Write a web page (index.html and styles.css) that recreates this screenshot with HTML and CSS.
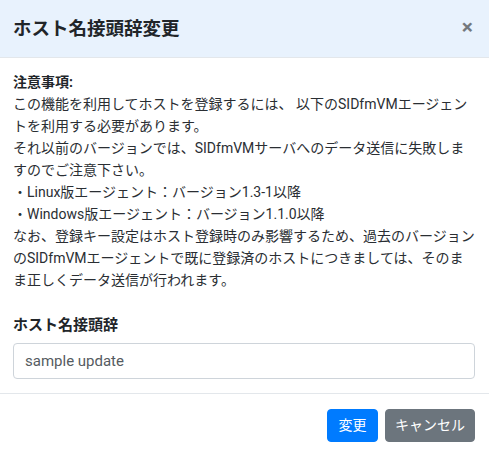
FILE: index.html
```html
<!DOCTYPE html>
<html lang="ja">
<head>
<meta charset="utf-8">
<title>ホスト名接頭辞変更</title>
<link rel="stylesheet" href="styles.css">
</head>
<body>
<div class="modal">
  <div class="modal-header">
    <h5 class="modal-title">ホスト名接頭辞変更</h5>
    <button class="close" type="button" aria-label="Close">×</button>
  </div>
  <div class="modal-body">
    <p class="note"><strong>注意事項:</strong><br>この機能を利用してホストを登録するには、 以下のSIDfmVMエージェントを利用する必要があります。<br>それ以前のバージョンでは、SIDfmVMサーバへのデータ送信に失敗しますのでご注意下さい。<br>・Linux版エージェント：バージョン1.3-1以降<br>・Windows版エージェント：バージョン1.1.0以降<br>なお、登録キー設定はホスト登録時のみ影響するため、過去のバージョンのSIDfmVMエージェントで既に登録済のホストにつきましては、そのまま正しくデータ送信が行われます。</p>
    <div class="form-group">
      <label class="label" for="prefix">ホスト名接頭辞</label>
      <input class="input" id="prefix" type="text" value="sample update">
    </div>
  </div>
  <div class="modal-footer">
    <button class="btn btn-primary" type="button">変更</button>
    <button class="btn btn-secondary" type="button">キャンセル</button>
  </div>
</div>
</body>
</html>
```

FILE: styles.css
```css
* { box-sizing: border-box; }
html, body { margin: 0; padding: 0; background: #fff; }
body {
  font-family: Roboto, "Noto Sans CJK JP", sans-serif;
  font-size: 14px;
  line-height: 22px;
  color: #212529;
}
.modal { width: 489px; background: #fff; }
.modal-header {
  display: flex;
  align-items: center;
  justify-content: space-between;
  background: #e8f2fd;
  border-bottom: 1px solid #e3e7eb;
  padding: 14px 14px 14px 13px;
  height: 58px;
}
.modal-title {
  margin: 0;
  font-size: 18.5px;
  line-height: 28px;
  font-weight: 700;
  color: #212529;
}
.close {
  border: 0;
  background: transparent;
  padding: 0 2px 0 0;
  font-family: Roboto, sans-serif;
  font-size: 21px;
  font-weight: 700;
  line-height: 1;
  color: #000;
  opacity: .5;
  margin-top: -2px;
}
.modal-body { padding: 13px 14px 14px 13px; }
.note { margin: 0 0 23px; color: #2a2e33; }
.note strong { font-weight: 700; color: #212529; }
.form-group { display: flex; flex-direction: column; }
.label {
  font-size: 15px;
  font-weight: 700;
  line-height: 22px;
  margin-bottom: 7px;
}
.input {
  width: 462px;
  height: 36px;
  border: 1px solid #ced4da;
  border-radius: 4px;
  padding: 0 11px;
  font-family: Roboto, "Noto Sans CJK JP", sans-serif;
  font-size: 15px;
  color: #555b61;
  background: #fff;
}
.modal-footer {
  display: flex;
  justify-content: flex-end;
  gap: 7px;
  border-top: 1px solid #e3e7eb;
  padding: 15px 14px 14px;
}
.btn {
  border: 1px solid transparent;
  border-radius: 4px;
  height: 33px;
  padding: 0;
  white-space: nowrap;
  text-align: center;
  font-family: Roboto, "Noto Sans CJK JP", sans-serif;
  font-size: 14px;
  line-height: 21px;
  color: #fff;
}
.btn-primary { background: #007bff; border-color: #007bff; width: 51px; }
.btn-secondary { background: #6c757d; border-color: #6c757d; width: 90px; }
```
